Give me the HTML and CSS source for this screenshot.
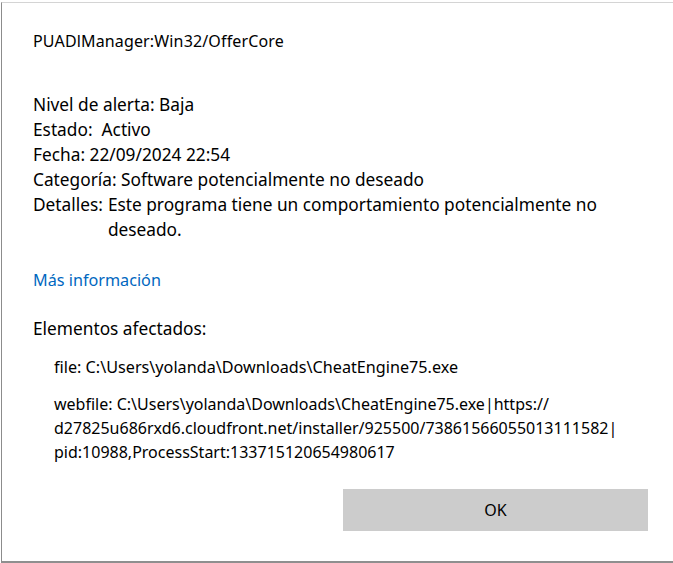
FILE: index.html
```html
<!DOCTYPE html>
<html lang="es">
<head>
  <meta charset="UTF-8" />
  <meta name="viewport" content="width=device-width, initial-scale=1.0"/>
  <title>Detalles de amenaza</title>
  <link rel="stylesheet" href="styles.css">
</head>
<body>
  <div class="dialog">
    <h1 class="threat-name">PUADlManager:Win32/OfferCore</h1>

    <div class="info">
      <div class="row"><span class="label">Nivel de alerta:</span> <span>Baja</span></div>
      <div class="row"><span class="label">Estado:</span>&nbsp; <span>Activo</span></div>
      <div class="row"><span class="label">Fecha:</span> <span>22/09/2024 22:54</span></div>
      <div class="row"><span class="label">Categoría:</span> <span>Software potencialmente no deseado</span></div>
      <div class="row detail-row">
        <span class="label">Detalles:</span>
        <span class="value">Este programa tiene un comportamiento potencialmente no deseado.</span>
      </div>
    </div>

    <a class="more-link" href="#">Más información</a>

    <div class="affected">
      <div class="affected-title">Elementos afectados:</div>
      <div class="item">file: C:\Users\yolanda\Downloads\CheatEngine75.exe</div>
      <div class="item item-web">webfile: C:\Users\yolanda\Downloads\CheatEngine75.exe|https://<br>d27825u686rxd6.cloudfront.net/installer/925500/73861566055013111582|<br>pid:10988,ProcessStart:133715120654980617</div>
    </div>

    <div class="actions">
      <button type="button" class="ok-btn">OK</button>
    </div>
  </div>
</body>
</html>
```

FILE: styles.css
```css
html, body {
  margin: 0;
  background: #fff;
}
body {
  font-family: 'Segoe UI', 'Noto Sans', sans-serif;
  font-size: 16px;
  color: #000;
  padding-top: 2px;
  padding-left: 1px;
}
.dialog {
  box-sizing: border-box;
  height: 561px;
  border-top: 1px solid #d4d4d4;
  border-left: 1px solid #8c8c8c;
  border-bottom: 2px solid #8f8f8f;
  padding: 26px 40px 0 31px;
  display: flex;
  flex-direction: column;
}
.threat-name {
  margin: 0;
  font-size: 16px;
  font-weight: normal;
  line-height: 25px;
  letter-spacing: 0.15px;
}
.info {
  margin-top: 38px;
  max-width: 590px;
  font-size: 17.3px;
  line-height: 25px;
}
.detail-row {
  display: flex;
}
.detail-row .value {
  margin-left: 5px;
}
.more-link {
  margin-top: 26px;
  line-height: 25px;
  font-size: 16.2px;
  color: #0067c0;
  text-decoration: none;
  align-self: flex-start;
}
.affected {
  margin-top: 23px;
}
.affected-title {
  font-size: 17.3px;
  line-height: 25px;
}
.item {
  margin-left: 21px;
  margin-top: 14px;
  line-height: 25px;
  font-size: 16.2px;
}
.item-web {
  margin-top: 12px;
  font-size: 16px;
  line-height: 24px;
}
.actions {
  display: flex;
  justify-content: flex-end;
  margin-top: 25px;
  margin-right: -15px;
}
.ok-btn {
  width: 305px;
  height: 42px;
  background: #cccccc;
  border: none;
  font-family: inherit;
  font-size: 16px;
  color: #000;
}
```
